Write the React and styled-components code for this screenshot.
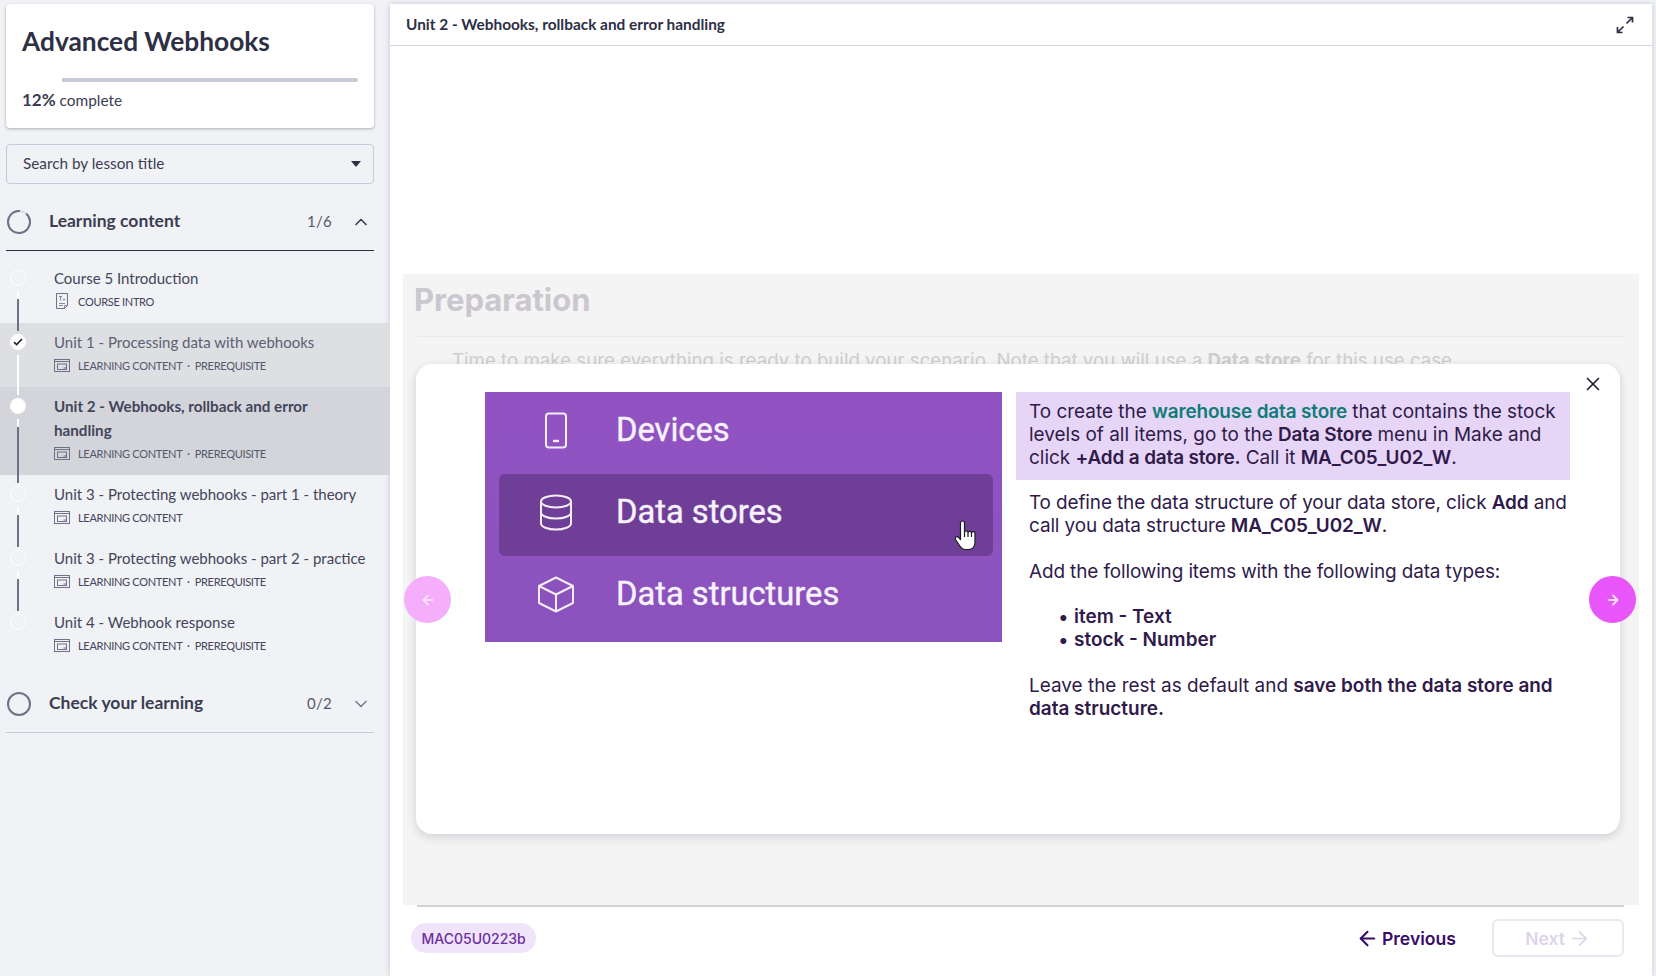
import React from "react";
import styled, { createGlobalStyle } from "styled-components";
import { ChevronUp, ChevronDown, X, ArrowLeft, ArrowRight } from "lucide-react";

const SANS = `Lato, "Noto Sans", sans-serif`;
const INTER = `Inter, "Liberation Sans", sans-serif`;

const lessons = [
  { title: "Course 5 Introduction", tags: "COURSE INTRO", kind: "intro", line: true },
  { title: "Unit 1 - Processing data with webhooks", tags: "LEARNING CONTENT  ·  PREREQUISITE", state: "done", line: true },
  { title: "Unit 2 - Webhooks, rollback and error handling", tags: "LEARNING CONTENT  ·  PREREQUISITE", state: "current", line: true },
  { title: "Unit 3 - Protecting webhooks - part 1 - theory", tags: "LEARNING CONTENT", line: true },
  { title: "Unit 3 - Protecting webhooks - part 2 - practice", tags: "LEARNING CONTENT  ·  PREREQUISITE", line: true },
  { title: "Unit 4 - Webhook response", tags: "LEARNING CONTENT  ·  PREREQUISITE" },
];

export default function App() {
  return (
    <>
      <GlobalStyle />
      <Page>
        <Sidebar>
          <CourseCard>
            <CourseTitle>Advanced Webhooks</CourseTitle>
            <Progress><ProgressFill style={{ width: "12%" }} /></Progress>
            <ProgressLabel><strong>12%</strong> complete</ProgressLabel>
          </CourseCard>

          <SearchSelect>
            <span>Search by lesson title</span>
            <Caret />
          </SearchSelect>

          <SectionHead $open>
            <ProgressRing $partial />
            <SectionTitle>Learning content</SectionTitle>
            <SectionCount>1/6</SectionCount>
            <SectionChevron><ChevronUp size={20} strokeWidth={2} color="#3b3d52" /></SectionChevron>
          </SectionHead>

          <LessonList>
            {lessons.map((l) => (
              <Lesson key={l.title} $state={l.state}>
                <Dot $state={l.state}>{l.state === "done" && <CheckMark />}</Dot>
                {l.line && <Rail $state={l.state} />}
                <LessonTitle $state={l.state}>{l.title}</LessonTitle>
                <LessonMeta $state={l.state}>
                  {l.kind === "intro" ? <IntroIcon /> : <ContentIcon />}
                  {l.tags}
                </LessonMeta>
              </Lesson>
            ))}
          </LessonList>

          <SectionHead>
            <ProgressRing />
            <SectionTitle>Check your learning</SectionTitle>
            <SectionCount>0/2</SectionCount>
            <SectionChevron><ChevronDown size={20} strokeWidth={1.6} color="#6f7186" /></SectionChevron>
          </SectionHead>
        </Sidebar>

        <Main>
          <TopBar>
            <TopTitle>Unit 2 - Webhooks, rollback and error handling</TopTitle>
            <ExpandIcon />
          </TopBar>

          <Stage>
            <Heading>Preparation</Heading>
            <HeadingRule />
            <Intro>
              Time to make sure everything is ready to build your scenario. Note that you will use a <b>Data store</b> for this use case.
            </Intro>

            <Modal>
              <CloseButton><X size={22} strokeWidth={1.8} /></CloseButton>
              <RoundButton $side="left"><ArrowLeft size={16} strokeWidth={2.4} /></RoundButton>
              <RoundButton $side="right"><ArrowRight size={16} strokeWidth={2.4} /></RoundButton>

              <MenuShot>
                <MenuRow>
                  <MenuIconBox><PhoneIcon /></MenuIconBox>
                  Devices
                </MenuRow>
                <MenuRow $active>
                  <MenuIconBox><DatabaseIcon /></MenuIconBox>
                  Data stores
                  <HandCursor />
                </MenuRow>
                <MenuRow>
                  <MenuIconBox><CubeIcon /></MenuIconBox>
                  Data structures
                </MenuRow>
              </MenuShot>

              <Copy>
                <Callout>
                  To create the <Teal>warehouse data store</Teal> that contains the stock levels of all items, go to the <b>Data Store</b> menu in Make and click <b>+Add a data store.</b> Call it <b>MA_C05_U02_W</b>.
                </Callout>
                <Para $tight>
                  To define the data structure of your data store, click <b>Add</b> and call you data structure <b>MA_C05_U02_W</b>.
                </Para>
                <Para $tight>Add the following items with the following data types:</Para>
                <Bullets>
                  <li><b>item - Text</b></li>
                  <li><b>stock - Number</b></li>
                </Bullets>
                <Para>
                  Leave the rest as default and <b>save both the data store and data structure.</b>
                </Para>
              </Copy>
            </Modal>
          </Stage>

          <FooterRule />
          <Footer>
            <CodeBadge>MAC05U0223b</CodeBadge>
            <PrevLink><ArrowLeft size={23} strokeWidth={2.2} /> Previous</PrevLink>
            <NextButton>Next <ArrowRight size={23} strokeWidth={1.8} /></NextButton>
          </Footer>
        </Main>
      </Page>
    </>
  );
}

// small drawings
const ProgressRing = ({ $partial }) => (
  <RingSvg width="24" height="24" viewBox="0 0 24 24" fill="none">
    <circle cx="12" cy="12" r="11" stroke={$partial ? "#dcdee5" : "#6f7186"} strokeWidth="2" />
    {$partial && (
      <circle cx="12" cy="12" r="11" stroke="#6f7186" strokeWidth="2" strokeDasharray="62 69.1" transform="rotate(-50 12 12)" />
    )}
  </RingSvg>
);

const CheckMark = () => (
  <svg width="10" height="8" viewBox="0 0 10 8" fill="none" stroke="#1d1d2b" strokeWidth="1.6">
    <path d="M1 4.2 3.6 6.6 9 1" />
  </svg>
);

const IntroIcon = () => (
  <MetaSvg width="16" height="16" viewBox="0 0 16 16" fill="none" stroke="#6f7186">
    <path d="M2.5.5h11v12l-3 3h-8z" />
    <path d="M10.5 15.5v-3h3M5 10.5h6M5 12.5h4M5 3.5h3M6.5 3.5v4M9 5.5l2 2M11 5.5l-2 2" strokeWidth=".8" />
  </MetaSvg>
);

const ContentIcon = () => (
  <MetaSvg width="16" height="13" viewBox="0 0 16 13" fill="none" stroke="#6f7186">
    <rect x=".5" y=".5" width="15" height="12" />
    <path d="M.5 2.5h15" />
    <rect x="3.5" y="5" width="9" height="5.5" />
    <path d="M9.5 9h3" />
  </MetaSvg>
);

const ExpandIcon = () => (
  <svg width="18" height="18" viewBox="0 0 18 18" fill="none" stroke="#2d2f45" strokeWidth="1.7">
    <path d="M10.5 7.5 16 2M11.5 1.5H16.5V6.5" />
    <path d="M7.5 10.5 2 16M1.5 11V16.5H6.5" />
  </svg>
);

const PhoneIcon = () => (
  <svg width="24" height="37" viewBox="0 0 24 37" fill="none" stroke="#f4eefa" strokeWidth="2">
    <rect x="2" y="1.5" width="20" height="34" rx="3" />
    <path d="M9 29h6" strokeWidth="2.4" />
  </svg>
);

const DatabaseIcon = () => (
  <svg width="34" height="37" viewBox="0 0 34 37" fill="none" stroke="#f4eefa" strokeWidth="2">
    <ellipse cx="17" cy="7.500" rx="15" ry="6" />
    <path d="M2 7.500V29.500c0 3.300 6.700 6 15 6s15-2.700 15-6V7.500" />
    <path d="M2 18.500c0 3.300 6.700 6 15 6s15-2.700 15-6" />
  </svg>
);

const CubeIcon = () => (
  <svg width="38" height="37" viewBox="0 0 38 37" fill="none" stroke="#f4eefa" strokeWidth="2" strokeLinejoin="round">
    <path d="M19 1.500 36 10v17L19 35.500 2 27V10z" />
    <path d="M2 10l17 8.500L36 10M19 18.500v17" />
  </svg>
);

const HandCursor = () => (
  <HandSvg width="23" height="31" viewBox="0 0 23 31" fill="#fff" stroke="#1c1c1c" strokeWidth="1.2" strokeLinejoin="round">
    <path d="M6.500 3a2 2 0 0 1 4 0v9a1.800 1.800 0 0 1 3.500.500 1.800 1.800 0 0 1 3.500.500 1.700 1.700 0 0 1 3.500.700V22c0 4.500-2.500 7.500-6.500 7.500h-3c-3 0-4.500-1.500-6-4L1.500 19.500c-1-2.200 1-3.700 2.800-2.300l2.200 2.300z" />
    <path d="M10.500 12v5M14 12.500V17M17.500 13v4" fill="none" />
  </HandSvg>
);

const GlobalStyle = createGlobalStyle`
  html, body {
    margin: 0;
    height: 100%;
    overflow: hidden;
    background: #f1f2f5;
  }
  * {
    box-sizing: border-box;
  }
`;

const Page = styled.div`
  display: flex;
  height: 976px;
  width: 1656px;
  font-family: ${SANS};
  color: #3b3d52;
`;

const Sidebar = styled.aside`
  flex: 0 0 390px;
  padding-top: 4px;
`;

const CourseCard = styled.div`
  background: #fff;
  border-radius: 4px;
  box-shadow: 0 1px 3px rgba(40, 42, 70, 0.35);
  height: 124px;
  margin: 0 16px 0 6px;
  padding: 22px 16px 0 16px;
`;

const CourseTitle = styled.h1`
  font-size: 26.3px;
  font-weight: 700;
  line-height: 30px;
  margin: 0 0 22px;
  color: #2d2f45;
`;

const Progress = styled.div`
  background: #c7cad8;
  border-radius: 2px;
  height: 4px;
  margin-bottom: 8px;
`;

const ProgressFill = styled.div`
  background: #fff;
  height: 100%;
`;

const ProgressLabel = styled.div`
  font-size: 15.400px;
  line-height: 20px;
  strong { font-size: 17px; }
`;

const SearchSelect = styled.div`
  align-items: center;
  border: 1px solid #c7cad8;
  border-radius: 4px;
  display: flex;
  font-size: 15.300px;
  height: 40px;
  justify-content: space-between;
  margin: 16px 16px 0 6px;
  padding: 0 12px 0 16px;
  span:first-child { padding-bottom: 3px; }
`;

const Caret = styled.span`
  border-left: 5px solid transparent;
  border-right: 5px solid transparent;
  border-top: 6px solid #2d2f45;
`;

const SectionHead = styled.div`
  align-items: center;
  border-bottom: 1px solid ${(p) => (p.$open ? "#2d2f45" : "#c7cad8")};
  display: flex;
  height: 57px;
  margin: ${(p) => (p.$open ? "10px" : "9px")} 16px 0 6px;
`;

const RingSvg = styled.svg`
  flex: none;
  margin: 0 18px 0 1px;
`;

const SectionTitle = styled.span`
  flex: 1;
  font-size: 17.500px;
  font-weight: 700;
  padding-bottom: 3px;
`;

const SectionCount = styled.span`
  font-size: 15px;
  letter-spacing: 0.3px;
  color: #55576b;
  margin-right: 19px;
  padding-bottom: 3px;
`;

const SectionChevron = styled.span`
  display: flex;
  margin-right: 3px;
`;

const LessonList = styled.div`
  padding-top: 8px;
`;

const rowBg = { done: "#dedfe3", current: "#d4d5da" };

const Lesson = styled.div`
  background: ${(p) => rowBg[p.$state] || "transparent"};
  padding: 7px 8px 11px 54px;
  position: relative;
`;

const Dot = styled.span`
  align-items: center;
  background: ${(p) => (p.$state ? "#fff" : "transparent")};
  border: 1px solid #fff;
  border-radius: 50%;
  display: flex;
  height: 16px;
  justify-content: center;
  left: 10px;
  position: absolute;
  top: 11px;
  width: 16px;
`;

const Rail = styled.span`
  background: ${(p) =>
    p.$state === "done" ? "#fff" : "linear-gradient(#fff 0 8px, #6f7186 8px)"};
  bottom: -8px;
  left: 17px;
  position: absolute;
  top: 32px;
  width: 2px;
  z-index: 1;
`;

const LessonTitle = styled.div`
  color: ${(p) => (p.$state === "done" ? "#5d5f72" : "#43455a")};
  font-size: ${(p) => (p.$state === "current" ? "15.200px" : "15px")};
  font-weight: ${(p) => (p.$state === "current" ? 700 : 400)};
  line-height: 24px;
  max-width: ${(p) => (p.$state === "current" ? "290px" : "none")};
`;

const LessonMeta = styled.div`
  align-items: center;
  color: ${(p) => (p.$state ? "#55576b" : "#43455a")};
  display: flex;
  font-size: 11px;
  height: 22px;
  letter-spacing: -0.3px;
  white-space: pre;
`;

const MetaSvg = styled.svg`
  flex: none;
  margin-right: 8px;
`;

const Main = styled.main`
  background: #fff;
  box-shadow: 0 0 6px rgba(40, 42, 70, 0.2);
  display: flex;
  flex: 0 0 1262px;
  flex-direction: column;
  margin-top: 4px;
`;

const TopBar = styled.header`
  align-items: center;
  border-bottom: 1px solid #d3d3dd;
  display: flex;
  flex: none;
  height: 42px;
  justify-content: space-between;
  padding: 0 18px 0 16px;
`;

const TopTitle = styled.div`
  color: #2d2f45;
  font-size: 15.400px;
  font-weight: 700;
  padding-bottom: 2px;
`;

const Stage = styled.section`
  background: #f4f4f4;
  flex: none;
  height: 631px;
  margin: 228px 13px 0;
  padding: 8px 11px;
  position: relative;
`;

const Heading = styled.h2`
  color: #cbc7cf;
  font-family: ${INTER};
  font-size: 31px;
  font-weight: 700;
  line-height: 36px;
  margin: 0;
`;

const HeadingRule = styled.div`
  border-top: 1px solid #e9e9ea;
  margin: 18px 4px 0 3px;
`;

const Intro = styled.p`
  color: #cfcdd2;
  font-family: ${INTER};
  font-size: 18.700px;
  line-height: 23px;
  margin: 12px 0 0 38px;
`;

const Modal = styled.div`
  background: #fff;
  border-radius: 16px;
  box-shadow: 0 3px 10px rgba(30, 20, 50, 0.16);
  display: flex;
  font-family: ${INTER};
  gap: 14px;
  height: 470px;
  left: 13px;
  padding: 28px 50px 0 69px;
  position: absolute;
  right: 19px;
  top: 90px;
`;

const CloseButton = styled.span`
  color: #1f1f28;
  display: flex;
  position: absolute;
  right: 16px;
  top: 9px;
`;

const RoundButton = styled.span`
  align-items: center;
  background: ${(p) => (p.$side === "left" ? "#f5aefc" : "#e855f9")};
  border-radius: 50%;
  color: ${(p) => (p.$side === "left" ? "#fde9ff" : "#fff")};
  display: flex;
  height: 47px;
  justify-content: center;
  position: absolute;
  top: 212px;
  width: 47px;
  ${(p) => (p.$side === "left" ? "left: -12px;" : "right: -16px;")}
`;

const MenuShot = styled.div`
  background: linear-gradient(#9153c2, #8a52bc);
  color: #f7f2fb;
  display: flex;
  flex: 0 0 517px;
  flex-direction: column;
  font-family: Roboto, ${INTER};
  height: 250px;
  padding: 0 9px 0 14px;
`;

const MenuRow = styled.div`
  align-items: center;
  background: ${(p) => (p.$active ? "#6f3f98" : "transparent")};
  border-radius: 6px;
  display: flex;
  flex: none;
  font-size: 32.700px;
  font-weight: 400;
  -webkit-text-stroke: 0.4px #f7f2fb;
  height: 82px;
  padding-bottom: 6px;
  position: relative;
`;

const MenuIconBox = styled.span`
  align-items: center;
  display: flex;
  flex: none;
  justify-content: center;
  padding-right: 4px;
  width: 117px;
`;

const HandSvg = styled.svg`
  position: absolute;
  right: 16px;
  top: 46px;
`;

const Copy = styled.div`
  color: #2f1a4a;
  flex: 1;
  font-size: 18.950px;
  line-height: 23px;
  b { font-weight: 600; }
`;

const Callout = styled.div`
  background: #e6d5f6;
  height: 88px;
  padding: 8px 8px 0 13px;
  b { letter-spacing: -0.15px; }
`;

const Teal = styled.b`
  color: #0f7c78;
`;

const Para = styled.p`
  letter-spacing: ${(p) => (p.$tight ? "-0.12px" : "0")};
  margin: 11px -6px 22.500px 13px;
`;

const Bullets = styled.ul`
  list-style: none;
  margin: 1px 0 22.500px 13px;
  padding-left: 29px;
  li::before {
    content: "•";
    display: inline-block;
    width: 16px;
  }
`;

const FooterRule = styled.div`
  border-top: 2px solid #d6d0d4;
  flex: none;
  margin: 0 28px 0 27px;
`;

const Footer = styled.footer`
  align-items: center;
  display: flex;
  flex: 1;
  font-family: ${INTER};
  padding: 0 28px 7px 21px;
`;

const CodeBadge = styled.span`
  align-items: center;
  background: #f0e4fb;
  border-radius: 15px;
  color: #6b2fa0;
  display: flex;
  font-size: 14px;
  font-weight: 500;
  height: 30px;
  margin-right: auto;
  padding: 0 10.500px;
`;

const PrevLink = styled.span`
  align-items: center;
  color: #3a0a6b;
  display: flex;
  font-size: 17.600px;
  font-weight: 600;
  gap: 3px;
  margin-right: 36px;
`;

const NextButton = styled.span`
  align-items: center;
  border: 2px solid #ebe6f0;
  border-radius: 6px;
  color: #dcd5ea;
  display: flex;
  font-size: 17.500px;
  font-weight: 600;
  gap: 3px;
  height: 38px;
  justify-content: center;
  width: 132px;
`;
